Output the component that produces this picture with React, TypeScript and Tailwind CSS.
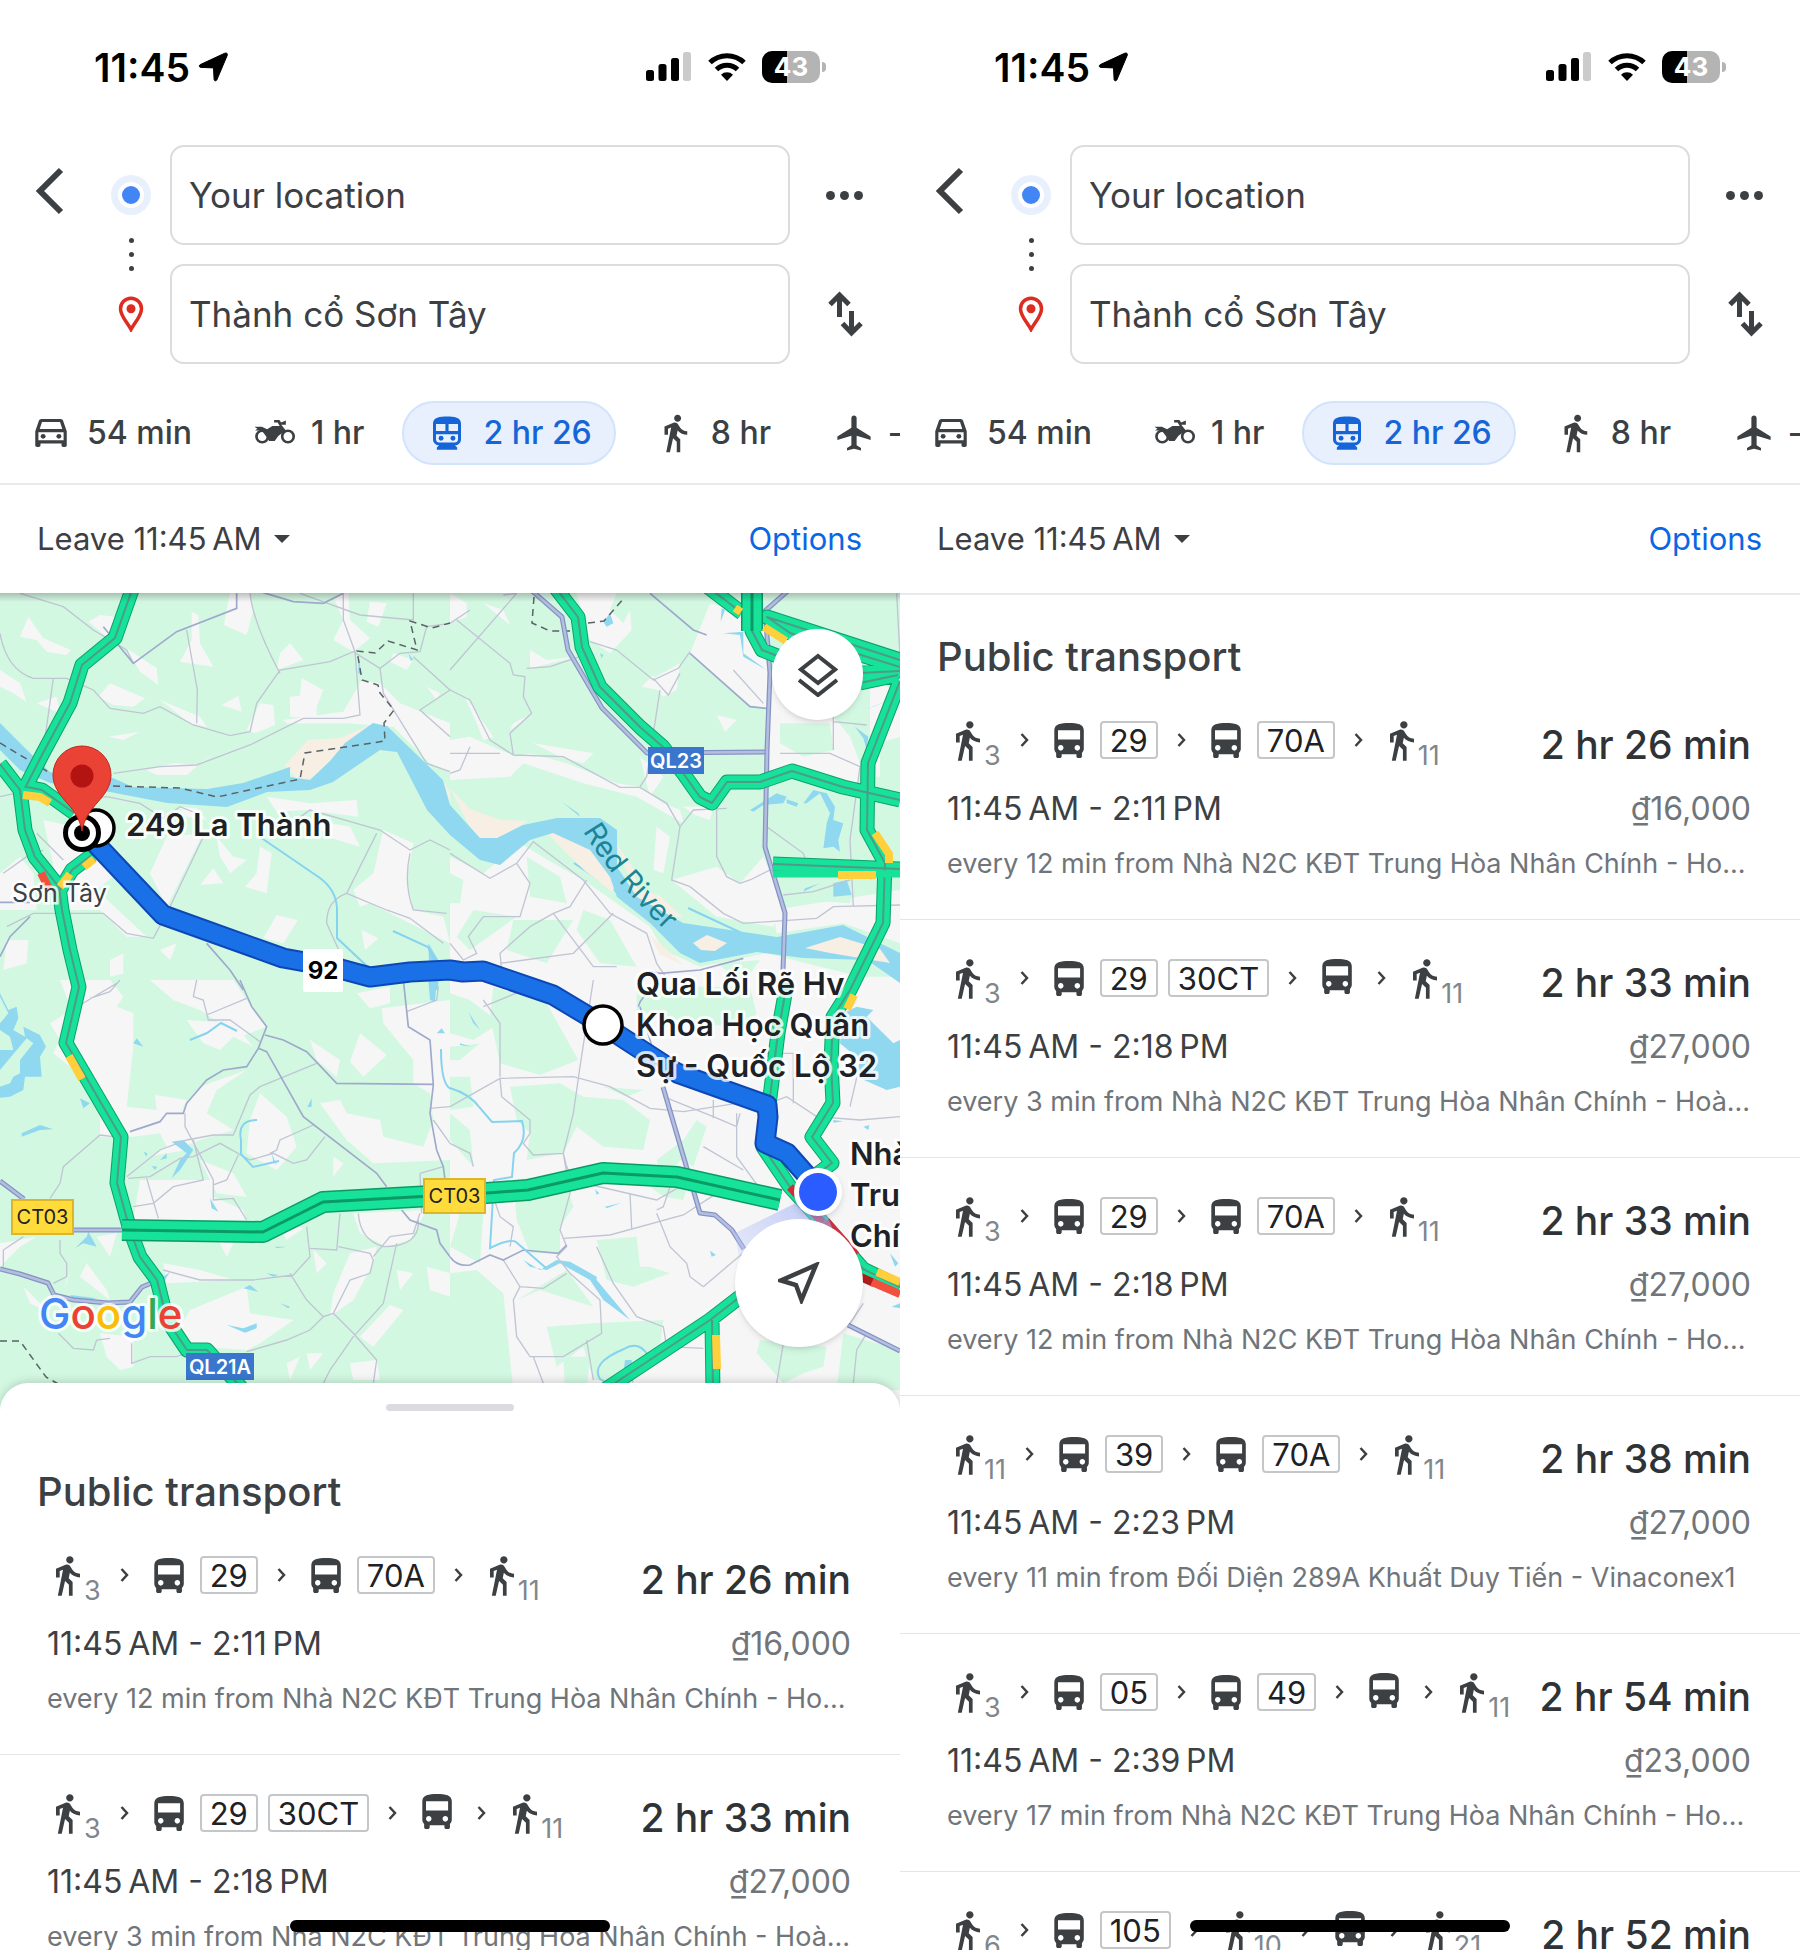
import { Fragment, type ReactNode } from "react";
import clsx from "clsx";

type Step = { kind: "walk"; min: number } | { kind: "bus"; lines: string[] };

type Trip = {
  steps: Step[];
  duration: string;
  times: string;
  fare: string;
  note: string;
};

const walk = (min: number): Step => ({ kind: "walk", min });
const bus = (...lines: string[]): Step => ({ kind: "bus", lines });

const TRIPS: Trip[] = [
  {
    steps: [walk(3), bus("29"), bus("70A"), walk(11)],
    duration: "2 hr 26 min",
    times: "11:45\u2009AM - 2:11\u2009PM",
    fare: "₫16,000",
    note: "every 12 min from Nhà N2C KĐT Trung Hòa Nhân Chính - Ho...",
  },
  {
    steps: [walk(3), bus("29", "30CT"), bus(), walk(11)],
    duration: "2 hr 33 min",
    times: "11:45\u2009AM - 2:18\u2009PM",
    fare: "₫27,000",
    note: "every 3 min from Nhà N2C KĐT Trung Hòa Nhân Chính - Hoà...",
  },
  {
    steps: [walk(3), bus("29"), bus("70A"), walk(11)],
    duration: "2 hr 33 min",
    times: "11:45\u2009AM - 2:18\u2009PM",
    fare: "₫27,000",
    note: "every 12 min from Nhà N2C KĐT Trung Hòa Nhân Chính - Ho...",
  },
  {
    steps: [walk(11), bus("39"), bus("70A"), walk(11)],
    duration: "2 hr 38 min",
    times: "11:45\u2009AM - 2:23\u2009PM",
    fare: "₫27,000",
    note: "every 11 min from Đối Diện 289A Khuất Duy Tiến - Vinaconex1",
  },
  {
    steps: [walk(3), bus("05"), bus("49"), bus(), walk(11)],
    duration: "2 hr 54 min",
    times: "11:45\u2009AM - 2:39\u2009PM",
    fare: "₫23,000",
    note: "every 17 min from Nhà N2C KĐT Trung Hòa Nhân Chính - Ho...",
  },
  {
    steps: [walk(6), bus("105"), walk(10), bus(), walk(21)],
    duration: "2 hr 52 min",
    times: "11:45\u2009AM - 2:37\u2009PM",
    fare: "₫23,000",
    note: "every 15 min from Nhà N2C KĐT Trung Hòa Nhân Chính - Ho...",
  },
];

const WALK_PATH =
  "M13.5 5.5c1.1 0 2-.9 2-2s-.9-2-2-2-2 .9-2 2 .9 2 2 2zM9.8 8.9L7 23h2.1l1.8-8 2.1 2v6h2v-7.5l-2.1-2 .6-3C14.8 12 16.8 13 19 13v-2c-1.9 0-3.5-1-4.3-2.4l-1-1.6c-.4-.6-1-1-1.7-1-.3 0-.5.1-.8.1L6 8.3V13h2V9.6l1.8-.7";

const MODES: { name: string; label: string; icon: ReactNode; active?: boolean }[] = [
  {
    name: "Drive",
    label: "54 min",
    icon: (
      <>
        <path
          fillRule="evenodd"
          d="M18.92 5.01C18.72 4.42 18.16 4 17.5 4h-11c-.66 0-1.21.42-1.42 1.01L3 11v8c0 .55.45 1 1 1h1c.55 0 1-.45 1-1v-1h12v1c0 .55.45 1 1 1h1c.55 0 1-.45 1-1v-8l-2.08-5.99zM6.85 5.7h10.3l1.3 4H5.55l1.3-4zM19.2 16.2H4.8v-4.7h14.4v4.7z"
        />
        <circle cx="7.5" cy="13.9" r="1.4" />
        <circle cx="16.5" cy="13.9" r="1.4" />
      </>
    ),
  },
  {
    name: "Motorcycle",
    label: "1 hr",
    icon: (
      <>
        <path d="M.3 8.4h4.2l3 1.4 3-1.8h4.2l-1.2-2h-2V4.6h3l1 1.4 2.700-1.200v2.500h-2.600l2.600 3.200-4.200 3-2.200 3H8.600L7 14l-2.600-3.400H.6L1.900 9.600.3 8.400z" />
        <circle cx="4.700" cy="14" r="3.300" fill="none" stroke="currentColor" strokeWidth="1.500" />
        <circle cx="19.400" cy="14" r="3.300" fill="none" stroke="currentColor" strokeWidth="1.500" />
      </>
    ),
  },
  {
    name: "Public transport",
    label: "2 hr 26",
    active: true,
    icon: (
      <>
        <path
          fillRule="evenodd"
          d="M12 2.500c-4 0-8 .5-8 4v9c0 1.930 1.570 3.500 3.500 3.500L6.200 20.300V21.500h11.600v-1.200L16.500 19c1.930 0 3.500-1.570 3.500-3.500v-9c0-3.500-4-4-8-4zM5.700 6.900h5.400v4H5.700v-4zm7.200 0h5.400v4h-5.400v-4zM5.700 12.700h12.600v2.800c0 1.100-.8 1.900-1.900 1.900H7.600c-1.100 0-1.900-.8-1.900-1.900v-2.800z"
        />
        <circle cx="8.600" cy="15" r="1.400" />
        <circle cx="15.400" cy="15" r="1.400" />
      </>
    ),
  },
  { name: "Walk", label: "8 hr", icon: <path d={WALK_PATH} /> },
  {
    name: "Fly",
    label: "—",
    icon: (
      <path d="M21.500 16v-2l-8-5V3.500c0-.83-.67-1.500-1.500-1.500s-1.500.67-1.500 1.500V9l-8 5v2l8-2.500V19l-2.500 1.500V22l4-1 4 1v-1.500L13.500 19v-5.500l8 2.500z" />
    ),
  },
];

function StatusBar() {
  return (
    <div className="flex h-[134px] items-center justify-between pr-[74px] pl-[94px] text-black">
      <div className="flex items-center gap-2">
        <span className="text-[39px] leading-none font-semibold">11:45</span>
        <svg viewBox="0 0 30 30" className="size-[30px]" aria-hidden="true">
          <path
            d="M28.500 1.200c.9.300 1.200 1 .8 2L18.800 28c-.6 1.300-2.600 1-2.700-.5l-.6-11.600-12.600-.5C1 15.300.7 13.400 2.300 12.600L26.600 1.300c.7-.3 1.300-.4 1.900-.1z"
            fill="currentColor"
            stroke="currentColor"
          />
        </svg>
      </div>
      <div className="flex items-center gap-4">
        <svg viewBox="0 0 46 30" className="h-[30px] w-[46px]" aria-label="Signal">
          <rect x="0" y="18" width="8" height="11" rx="2.500" />
          <rect x="12.500" y="12" width="8" height="17" rx="2.500" />
          <rect x="25" y="6" width="8" height="23" rx="2.500" />
          <rect x="37" y="0" width="8" height="29" rx="2.500" fill="#cbcbcb" />
        </svg>
        <svg viewBox="0 0 38 28" className="h-7 w-[38px]" aria-label="Wi-Fi">
          <g fill="none" stroke="currentColor" strokeWidth="5">
            <path d="M2 9.500a24.500 24.500 0 0 1 34 0" />
            <path d="M8.500 16.500a15 15 0 0 1 21 0" />
          </g>
          <path d="M19 28l-6-6.200a8.500 8.500 0 0 1 12 0z" />
        </svg>
        <div className="flex items-center gap-0.5">
          <div className="flex h-8 w-[58px] items-center justify-center rounded-[10px] bg-[linear-gradient(90deg,#000_43%,#b4b4b4_43%)] text-[26px] leading-none font-bold text-white">
            43
          </div>
          <div className="h-2.5 w-1 rounded-r-full bg-[#b4b4b4]" />
        </div>
      </div>
    </div>
  );
}

function SearchFields() {
  return (
    <div className="grid grid-cols-[101px_60px_1fr_110px] items-center gap-y-[19px] pt-[11px]">
      <button type="button" aria-label="Back" className="ml-[34px] mb-2 w-8">
        <svg viewBox="0 0 32 50" className="h-[50px] w-8">
          <path d="M27 4L6 25l21 21" fill="none" stroke="#3c4043" strokeWidth="6" />
        </svg>
      </button>
      <div className="relative flex items-center justify-center">
        <span className="flex size-10 items-center justify-center rounded-full bg-[#e8f0fe]">
          <span className="size-[26px] rounded-full border-4 border-white bg-[#4285f4]" />
        </span>
        <span className="absolute top-[63px] flex flex-col gap-[9px]">
          <i className="size-[5px] rounded-full bg-[#3c4043]" />
          <i className="size-[5px] rounded-full bg-[#3c4043]" />
          <i className="size-[5px] rounded-full bg-[#3c4043]" />
        </span>
      </div>
      <div className="pl-[9px]">
        <input
          aria-label="From"
          defaultValue="Your location"
          className="h-[100px] w-full rounded-[14px] border-2 border-[#dadce0] bg-white px-[17px] text-[35px] text-[#3c4043]"
        />
      </div>
      <button type="button" aria-label="More" className="ml-9 flex gap-[5px]">
        <i className="size-[9px] rounded-full bg-[#3c4043]" />
        <i className="size-[9px] rounded-full bg-[#3c4043]" />
        <i className="size-[9px] rounded-full bg-[#3c4043]" />
      </button>

      <span />
      <svg viewBox="0 0 26 36" className="mx-auto h-9 w-[26px]" aria-hidden="true">
        <path
          d="M13 33.500C9 26 2.500 20 2.500 12.700a10.500 10.500 0 0 1 21 0C23.500 20 17 26 13 33.500z"
          fill="none"
          stroke="#dd2c20"
          strokeWidth="3.500"
        />
        <circle cx="13" cy="12.700" r="4.500" fill="#dd2c20" />
      </svg>
      <div className="pl-[9px]">
        <input
          aria-label="To"
          defaultValue="Thành cổ Sơn Tây"
          className="h-[100px] w-full rounded-[14px] border-2 border-[#dadce0] bg-white px-[17px] text-[35px] text-[#3c4043]"
        />
      </div>
      <button type="button" aria-label="Swap" className="ml-[38px]">
        <svg viewBox="0 0 36 46" className="h-[46px] w-9">
          <g fill="none" stroke="#3c4043" strokeWidth="5">
            <path d="M11.500 26V4M2 13.500L11.500 4l9.500 9.500" />
            <path d="M23.500 20v22M14.500 32.500l9 9.500 9.500-9.500" />
          </g>
        </svg>
      </button>
    </div>
  );
}

function Header() {
  return (
    <header>
      <StatusBar />
      <SearchFields />
      <nav className="mt-[37px] flex gap-[14px] overflow-hidden border-b-2 border-[#e8eaed] pb-[18px] pl-1.5">
        {MODES.map((mode) => (
          <button
            key={mode.name}
            type="button"
            aria-label={mode.name}
            className={clsx(
              "flex h-16 shrink-0 items-center gap-[15px] rounded-full border-2 px-[22px] text-[32px] font-medium whitespace-nowrap",
              mode.active
                ? "border-[#d2e3fc] bg-[#e8f0fe] text-[#1565d8]"
                : "border-transparent text-[#3c4043]",
            )}
          >
            <svg viewBox="0 0 24 24" className="size-[42px]" fill="currentColor">
              {mode.icon}
            </svg>
            {mode.label}
          </button>
        ))}
      </nav>
      <div className="flex h-[108px] items-center justify-between pr-[38px] pl-[37px] text-[31px]">
        <button type="button" className="flex items-center gap-3 text-[#3c4043]">
          Leave 11:45{"\u2009"}AM
          <svg viewBox="0 0 16 8" className="h-2 w-4" aria-hidden="true">
            <path d="M0 0h16L8 8z" fill="currentColor" />
          </svg>
        </button>
        <a href="#options" className="text-[#0b66e4]">
          Options
        </a>
      </div>
    </header>
  );
}

function StepView({ step }: { step: Step }) {
  if (step.kind === "walk") {
    return (
      <span className="flex items-start gap-1 pl-[2px]">
        <svg viewBox="6 1.500 13 21.500" className="h-10 w-6" aria-label="Walk">
          <path d={WALK_PATH} fill="#3c4043" />
        </svg>
        <sub className="static mt-[19px] text-[27px] leading-8 text-[#80868b]">{step.min}</sub>
      </span>
    );
  }
  return (
    <span className="flex items-center gap-[10px]">
      <svg viewBox="4 2 19.200 19" className="h-[35px] w-9" aria-label="Bus">
        <path
          d="M4 16c0 .88.39 1.670 1 2.220V20c0 .55.45 1 1 1h1c.55 0 1-.45 1-1v-1h8v1c0 .55.45 1 1 1h1c.55 0 1-.45 1-1v-1.780c.61-.55 1-1.340 1-2.220V6c0-3.500-3.580-4-8-4s-8 .5-8 4v10zm3.500 1c-.83 0-1.500-.67-1.500-1.500S6.670 14 7.500 14s1.500.67 1.500 1.500S8.330 17 7.500 17zm9 0c-.83 0-1.500-.67-1.500-1.500s.67-1.500 1.500-1.500 1.500.67 1.500 1.500-.67 1.500-1.500 1.500zm1.500-6H6V6h12v5z"
          fill="#3c4043"
        />
      </svg>
      {step.lines.map((line) => (
        <span
          key={line}
          className="flex h-[38px] items-center rounded-[4px] border-2 border-[#c4c7c9] px-2 text-[31px] leading-none text-[#202124]"
        >
          {line}
        </span>
      ))}
    </span>
  );
}

function TripRow({ trip }: { trip: Trip }) {
  return (
    <li className="h-[238px] shrink-0 border-b border-[#e3e5e8] pt-[39px] pr-[49px] pl-[47px]">
      <div className="flex h-12 items-start justify-between">
        <div className="flex h-12 items-start pl-[7px]">
          {trip.steps.map((step, i) => (
            <Fragment key={i}>
              {i > 0 && (
                <svg viewBox="0 0 9 14" className="mt-3 mr-[25px] ml-[19px] h-[14px] w-[9px]" aria-hidden="true">
                  <path d="M1.500 1l5.500 6-5.500 6" fill="none" stroke="#3c4043" strokeWidth="2.500" />
                </svg>
              )}
              <StepView step={step} />
            </Fragment>
          ))}
        </div>
        <strong className="text-[39px] leading-[48px] font-medium whitespace-nowrap text-[#303336]">
          {trip.duration}
        </strong>
      </div>
      <div className="mt-5 flex justify-between text-[32px] leading-10">
        <span className="text-[#3c4043]">{trip.times}</span>
        <span className="text-[#70757a]">{trip.fare}</span>
      </div>
      <p className="mt-[15px] text-[27px] leading-10 whitespace-nowrap text-[#70757a]">{trip.note}</p>
    </li>
  );
}

function TripList({ trips }: { trips: Trip[] }) {
  return (
    <>
      <h2 className="mt-9 pl-[37px] text-[40px] leading-[51px] font-medium text-[#3c4043]">
        Public transport
      </h2>
      <ul>
        {trips.map((trip, i) => (
          <TripRow key={i} trip={trip} />
        ))}
      </ul>
    </>
  );
}

// Ground cover, drawn per quadrant on a grid of 1350 units to 450 px.
const TERRAIN = [
  {
    at: "translate(0 -3) scale(.33333)",
    clear:
      "M85 80L60 140 110 150 140 185 200 195 212 180 130 145ZM575 65L595 75 600 160 640 230 540 215 575 150ZM690 10L750 10 760 60 740 135 672 105 680 60ZM1110 35L1160 40 1135 110 1100 95ZM1000 20L1045 10 1050 90 1110 145 1060 185 1000 150 1030 90ZM870 160L910 210 830 240 840 190ZM300 75L345 80 320 140 265 95ZM380 175L470 235 475 285 420 245ZM330 280L435 325 400 350 340 345 295 320ZM0 240L60 280 80 335 40 310 0 290ZM905 265L970 300 950 350 950 385 870 380 870 320 900 318ZM780 340L820 345 825 405 765 430 740 420ZM665 345L715 318 725 365ZM480 330L600 380 620 410 570 400ZM325 440L420 425 370 450ZM440 540L520 520 600 525 650 480 560 555 470 555ZM1085 270L1140 280 1200 340 1350 400V545L1290 520 1180 410 1040 400 860 400 850 390 1030 365ZM800 620L930 640 1070 630 1075 680 920 660 830 665ZM535 650L590 655 620 690 560 680ZM940 690L1050 710 1080 770 980 740ZM650 740L700 800 740 810 690 850 680 830 660 800ZM780 770L815 790 800 910 735 890 770 850ZM600 885L640 835 670 880ZM1150 720L1240 760 1220 870 1240 960 1330 980 1350 1060 1290 1030 1110 940 1080 950 1060 900 1120 850ZM830 975L893 990 850 1060 790 1045ZM1085 1020L1135 1045 1095 1080ZM500 740L610 730 500 950 450 850ZM130 690L270 720 350 850 290 900 440 1040 380 1040 300 960 190 960ZM0 850L60 800 100 850 110 960 0 960ZM20 1050L85 1050 80 1120 10 1140ZM330 1110L370 1090 370 1150 330 1160ZM480 1080L530 1060 510 1110ZM1180 190L1240 210 1220 240 1170 215ZM1280 290L1320 310 1310 330ZM110 340L170 320 180 370Z",
    green: "",
    lanes:
      "M60 10L190 50 280 120 380 180 400 220M0 130Q20 240 100 265L200 265 280 300 330 355 430 370 480 350 580 405 690 437 750 425 770 340 840 240 990 215 1060 185 1140 235 1200 190 1260 185 1280 110 1350 100M750 10Q760 100 840 250M560 120L592 300 590 400M1030 10L1030 90 1065 185 1080 375 1030 385 910 385 750 465 590 525 480 530 340 550M900 10L1080 75 1240 90V10M1140 235L1150 310 1280 520 1350 545M1240 200L1350 300 1260 360 1350 440M160 265L130 480M0 620Q100 590 200 640L320 620 420 640 490 685 540 650 590 670M110 730L190 810M10 850L80 800 130 780M610 740L510 950 460 1045 380 1030 310 970 100 970 20 1010M860 710L930 660 1140 720 1230 780 1290 750 1350 780M1130 730L1040 910 1160 960 1230 985 1330 1060M1230 790Q1210 880 1240 960L1340 970M1040 910Q980 930 980 1000L1030 1110",
    roads: "M710 10L710 55 530 125 400 220 310 110M780 5L880 35 970 40 1030 10M0 937L90 937M620 1060L690 1140 730 1200M0 1100L30 1040 90 980",
    water:
      "M1225 190l15 20-8 2zM1075 195l10 60-10-5z M1285 1060l30 50v90h-25z",
  },
  {
    at: "translate(450 -3) scale(.33333)",
    clear:
      "M380 10L500 10 480 60 520 100 540 60 545 120 480 190 420 150ZM0 10L50 40 50 80 0 100ZM780 40L940 80 960 360 900 345 720 190ZM600 270L690 220 680 300 640 320ZM240 180L290 210 380 200 240 235ZM100 40L160 60 180 105 150 80ZM0 450L60 440 150 480 200 500 240 490 350 520 500 580 570 590 640 640 690 660 700 700 560 620 400 580 220 520 180 560 0 570ZM40 310L130 440 100 450 80 400ZM250 460L430 490 400 520 330 500ZM800 375L860 390 825 425ZM620 710L660 740 640 850 610 840ZM700 650L790 650 780 690 735 675ZM800 830L870 880 940 800 1000 950 970 1010 800 980 665 870ZM0 800L100 850 210 760 310 820 400 870 600 1010 640 1080 750 1130 950 1090 1350 1190V1200H0ZM960 250L1150 380 1200 440 1230 520 1220 620 960 540ZM970 960L1350 900V1060L1180 1000 980 1030ZM180 420L250 370 190 400ZM1130 150L1350 320V560L1260 560V300ZM570 500L640 560 600 620ZM575 290L610 255 625 300Z",
    green:
      "M230 800L330 860 350 940 240 920ZM70 960L200 980 60 1080 20 1040ZM190 990L370 990 290 1120 170 1080ZM400 960L480 990 560 1130 450 1120 380 1020ZM990 400L1140 400 1150 480 1060 500 990 460ZM960 570L1200 600 1210 720 970 700ZM960 730L1190 750 1200 850 1000 830ZM1040 890L1220 860 1200 940 1050 930ZM0 850L40 870 30 940 0 940ZM800 1120L930 1110 880 1180ZM1290 460L1350 440V600L1290 590Z",
    lanes:
      "M0 100L60 60M0 240L200 10M20 90L180 220 190 255 225 260 220 320 245 370 180 430 190 495M230 235L300 230 390 200M160 15L200 10M420 155L500 180 610 270 685 235 720 185M610 265L655 315 690 250M630 300L590 560 570 590M0 300L60 330 120 450 190 495 340 500 510 592 570 592 650 640 690 710 665 870 720 890 820 970 880 1000 1100 985 1150 950 1350 945M800 650V800L830 860 870 880 900 870 960 840M690 710L730 660 830 655M0 490L150 490M0 550L30 540 60 470M0 790L120 865 200 820 250 755 400 870 480 970 590 1030 620 1120 660 1180M200 820L240 880 210 980 100 980 55 1040 80 1090 40 1110 0 1060M410 870L360 950 310 970 240 1010 150 1090 160 1190M310 970L430 1130 500 1130M490 970L370 1090 150 1120M1150 380V480M990 490L1140 490 1230 530 1200 750 1210 950M950 710L1060 790 1070 820M1000 915L1090 905 1200 870M1150 395L1250 405M940 340L850 240M1340 10L1350 200",
    roads:
      "M720 190L900 350 950 355M600 10L730 120 770 135M570 1200Q560 1130 630 1150L750 1140 880 1105",
    water:
      "M335 635L390 680 385 670ZM820 130L880 125 880 190 950 240 880 200 870 135ZM480 70L490 100 470 110 460 95ZM815 55L825 60 812 95ZM900 660L980 610 1010 620 1000 640 940 645 910 665ZM1010 628L1045 640 1040 650 1010 640ZM1060 640L1090 600 1130 610 1155 650 1150 690 1180 700 1165 750 1170 785 1150 770 1120 775 1130 700 1140 670 1110 610 1070 640ZM1255 355L1320 330 1270 350ZM1215 410L1255 440 1250 480 1240 445ZM1065 895L1110 880 1060 905ZM1150 880L1190 870 1205 915 1150 920ZM450 190L460 195 455 205Z",
  },
  {
    at: "translate(0 387) scale(.33333)",
    clear:
      "M180 0L330 0 370 50 350 80 400 100 400 200 380 380 470 390 465 345 560 360 540 400 600 320 740 270 650 330 620 400 700 450 600 480 500 520 400 470 300 470 300 410 330 400 210 260 160 220 180 180 150 130 215 90ZM450 0L700 0 740 60 800 140 720 170 600 90 520 60ZM560 120L700 130 760 200 700 170 660 210 610 190ZM1070 40L1170 20 1170 70 1110 85ZM1145 85L1350 60V540L1120 550 1040 480 960 370 1020 360 1040 400 1140 420 1150 470 1270 500 1300 420 1290 340 1240 310 1240 240 1150 130ZM1080 160L1160 225 1090 290 1050 245ZM930 180L1020 240 1010 290 950 240ZM780 340L860 410 890 500 830 570 740 520 750 420ZM1000 530L1030 550 1000 590ZM420 600L640 600 640 650 730 690 740 720 400 720ZM490 850L600 870 700 900 500 910ZM260 850L320 930 330 960 240 890ZM200 900L215 870 190 930ZM570 990L740 920 750 1000 880 1020 780 1090 740 1110 600 1100 530 1060ZM650 770L700 790 680 830ZM830 725L910 745 860 780ZM940 810L980 850 950 880ZM1050 820L1130 800 1120 850 1060 960 990 1010 1000 940ZM1190 870L1240 880 1200 930ZM1280 860L1350 880V950L1290 930ZM1170 975L1210 990 1120 1100 1080 1070ZM300 1060L400 1070 400 1160 360 1170 320 1130ZM920 1120L970 1120 930 1170ZM860 1150L900 1130 870 1200ZM1050 1150L1130 1140 1140 1200 1060 1200ZM290 770L350 760 330 830ZM70 920L110 960 150 1000 90 970ZM0 790L110 770 60 800 0 860ZM600 540L700 580 740 650 650 640ZM440 530L500 480 560 510ZM1060 700L1280 690 1230 780 1160 800 1080 760Z",
    green: "M1260 580L1330 565 1340 620 1270 650ZM400 470L480 460 500 500 400 560Z",
    lanes:
      "M240 75L350 10M360 0L330 35 270 55M590 0L580 50 610 60 625 120 690 120 780 185M620 105L740 55M555 400V440L640 600V660L700 655 740 720M385 595L450 590 540 535 580 530M380 590L480 510 560 480 640 465 700 465 750 345 780 320 950 250M580 530L660 490 750 540 820 520 880 550 920 540 975 470M580 480L610 600 520 620 460 670 400 680M440 595L475 715M940 435L840 480 830 510 810 520M715 525L680 600 640 615M300 465L340 470M300 465L190 560 180 610 150 655M70 770L10 810 10 860M180 780V820L200 850V890L160 910M490 870L600 900 760 900 880 885 930 830 920 740M930 805L1010 810 1020 700M1015 800L1110 820 1120 840 1110 880 1050 900 1000 1000 970 1010 920 960 870 880M970 1010L930 1050 860 1080 740 1115M1120 830L1170 770 1240 760 1260 700M1190 790L1150 970 1060 1070 990 1170 970 1210M1000 1000L1060 1060 1130 1140 1120 1210M1075 700Q1080 780 1150 800 1260 800 1255 720M175 1060L220 1105 280 1110 290 1080 330 1075M395 1090V1150L450 1130 530 1130 580 1110M1260 580L1330 560M1260 580L1265 700M1290 385L1350 380M1300 420L1350 490M1220 95L1310 60 1315 20",
    roads:
      "M720 0L755 80 800 140 775 205 740 260 670 270 620 300 560 370 550 400 500 400 480 425 390 455M795 165L850 180 920 215 1010 310 1300 313M775 205L800 215 910 410 1130 580 1160 620M1210 0L1225 140 1290 180 1300 315 1290 400 1310 510 1330 560 1335 600M1205 690L1230 720 1310 750 1320 790 1350 830",
    water:
      "M0 40L25 90 50 80 55 115 40 150 75 170 70 140 120 165 138 200 120 230 125 290 75 290 70 330 30 350 0 353V320L30 310 40 290 60 280 60 240 100 190 80 175 0 270V210L40 210 30 170 0 150V130L25 100 0 50ZM65 460L120 435 160 448 120 450 65 470ZM410 175L430 200 400 190ZM240 355L270 370 250 385ZM515 485L550 480 580 510 540 570 515 595 540 540 560 520ZM480 540L500 520 500 535ZM430 515L442 520 440 530ZM455 558L472 560 465 570ZM815 520L830 555 820 545ZM935 355V380L922 382ZM1285 0L1310 0 1305 65 1290 60ZM1325 145L1335 160 1310 160ZM265 755L290 800 250 790 225 805 260 770ZM630 655L655 695 635 685ZM680 1035L730 1045 770 1030 770 1045 735 1058ZM730 925L750 915 775 935ZM840 970L870 980 865 985ZM485 895L510 875 495 900ZM825 800L860 800 830 805ZM800 880L835 885 820 890ZM210 945L290 955 230 965Z",
  },
  {
    at: "translate(450 387) scale(.33333)",
    clear: "M0 -10H1350V1330H0Z",
    green:
      "M130 20L290 70 385 240 270 285 150 250 120 110ZM0 40L60 60 150 130 70 180 0 160ZM560 20L900 20 920 100 880 140 700 130 560 90ZM180 320L330 310 400 350 520 360 600 420 580 510 460 500 380 440 340 520 230 540 240 460 200 420ZM740 420L770 440 730 560 690 540 640 620 620 540 700 480ZM190 600L340 580 370 680 330 740 330 820 240 820 200 720ZM0 880L80 870 160 940 200 1330H0ZM440 780L560 770 570 860 600 860 660 880 550 920 470 900ZM200 960L350 870 430 980 270 930ZM290 1040L430 1030 640 1020 630 1100 500 1200 430 1200 400 1100 320 1160ZM0 290L60 290 70 380 0 390ZM0 400L60 450 70 560 0 480ZM930 1080L1130 1100 1120 1160 1060 1180 1000 1210 920 1120ZM1180 1060L1350 1110V1230H1160ZM600 620L720 590 700 660 640 650ZM340 1130L420 1130 400 1330H350ZM460 320L580 330 530 350ZM0 200L90 190 30 240 0 240ZM30 700L100 700 90 850 0 800Z",
    lanes:
      "M430 0L390 260 370 400 340 520 360 640 330 750 350 800 320 830 360 880 450 960 455 1060 340 1130 240 1130 200 1070 190 960 210 920 160 840M0 380L150 295 370 290 480 320 600 385 700 395 860 370M150 295L155 350 240 420 240 460 220 490 250 525 340 520 350 560 370 600M100 60L150 130 150 290M100 80L210 35M340 775L480 765 700 705 800 640M0 490L60 520 70 560M120 620L150 710 190 740 180 800M540 640L545 745M360 600L620 660 690 620M620 700L660 800 710 850 720 890 760 920M760 920L890 810M210 920L280 925 350 880M440 800L490 910 560 1010 640 1040 650 1100 760 1105M640 350L790 410 860 440 870 400M790 360V415M860 400L860 530 940 640M940 410L930 380 1010 350 1100 410 1230 420 1350 410M1230 250L1200 380M920 220L1030 220 1030 370M760 500L880 570M660 620L640 680 620 690M980 1210L1000 1090M1210 1210L1220 1110 1250 1060M1200 1030L1240 970M250 1130L280 1210M410 1080L430 1200",
    roads:
      "M0 830Q20 860 60 855L120 825 160 840 220 810 325 820 350 795M565 80Q570 50 620 20M570 80L630 280",
    water:
      "M1180 100L1220 80 1270 90 1250 110 1330 190 1350 180V320L1310 330 1220 290 1230 240 1170 190ZM55 95L90 150 70 130ZM30 190L65 200 30 195ZM220 840L270 870 320 840 360 845 440 890 440 900 540 1020 460 960 420 900 330 850 290 870 240 860ZM525 1140L545 1140 550 1210 520 1180ZM465 680L515 668 470 685ZM780 812L798 825 785 830ZM1320 820L1345 850 1335 860ZM1325 980L1350 970V985ZM1240 440L1258 435 1255 450ZM1150 420L1180 424 1150 428ZM435 628L448 640 440 644Z",
  },
];

const STREAMS = [
  "M260 244l60 41q16 12 17 30v30l34 32",
  "M393 338l35 16 10 18",
  "M190 447l17-7 14-10 16 8M257 527q-20 0-16 20l0 14 12 13 26-6",
  "M441 456q0 36 10 40",
  "M450 495q20 6 30 20l12 14 30-1q6 20-8 32l-2 24-18 3-4 68q20-10 26-6l30 26",
  "M650 766q-10-20-26-10-34 14-24 30l36 20",
  "M574 270l50 34 60 40",
  "M688 315l60 28 70 12",
];

const TRAFFIC = [
  "M133-6L115 45 82 72 70 110 43 160 25 195",
  "M0 171L20 197 25 237 35 264 59 294 62 317 70 357 79 394 66 450 121 544 117 590 130 637 140 664 157 687 167 727 187 757 207 757 246 800",
  "M27 194L42 197 74 220",
  "M92 262L72 277 60 297",
  "M555-6L578 24 582 54 600 94 640 134 663 154 683 180 700 204 712 210 727 189 760 189 792 178 843 194 900 207",
  "M708-6L742 20",
  "M752 0V38L762 57 790 68",
  "M900 67L767 24 790 40 900 74",
  "M860 80L900 78M860 90L898 82",
  "M900 88L868 170 867 237 885 270 883 330 850 397 833 424 831 470 833 510 812 544 832 570 803 592",
  "M773 271L900 276",
  "M787 390L778 440 770 504 763 554 790 594 823 630 863 676 900 694",
  "M600 800L710 727 745 700M712 727L713 800",
];

const WIDE_TRAFFIC = [
  "M122 637L263 639 323 609 413 604 487 600 528 597 603 580 677 584 780 607",
  "M752-6V38",
];

const SLOW = [
  { d: "M23 202L40 204 50 210", color: "#ffcf3c" },
  { d: "M94 266L84 274M70 281L60 294", color: "#ffcf3c" },
  { d: "M41 280L50 298", color: "#f1503f" },
  { d: "M69 463L82 486", color: "#ffcf3c" },
  { d: "M735 15L741 19M764 34L786 48", color: "#ffcf3c" },
  { d: "M875 240L889 261V270", color: "#ffcf3c" },
  { d: "M838 282H876", color: "#ffcf3c" },
  { d: "M854 402L847 416", color: "#ffcf3c" },
  { d: "M716 742L717 776", color: "#ffcf3c" },
  { d: "M790 594L823 630M819 630L852 668M826 628L856 662", color: "#d0303a" },
  { d: "M856 682L874 690", color: "#b01c1c" },
  { d: "M872 689L900 701", color: "#f1503f" },
  { d: "M877 679L900 689", color: "#ffcf3c" },
];

const ROUTE =
  "M95 250L163 322 283 365 333 374 370 384 410 379 450 377 463 379 483 378 553 402 603 432 677 480 767 512 768 524 765 550 787 560 817 594";

function RoadShield({ x, y, width, label, tone }: { x: number; y: number; width: number; label: string; tone: "blue" | "yellow" }) {
  const blue = tone === "blue";
  const height = blue ? 27 : 34;
  return (
    <g>
      <rect
        x={x}
        y={y}
        width={width}
        height={height}
        fill={blue ? "#3a76cb" : "#ffdc3c"}
        stroke={blue ? "none" : "#dcb52b"}
        strokeWidth="2"
      />
      <text
        x={x + width / 2}
        y={y + height / 2 + 7}
        textAnchor="middle"
        className={blue ? "fill-white text-[20px] font-semibold" : "fill-[#202124] text-[20px]"}
      >
        {label}
      </text>
    </g>
  );
}

function StopLabel({ x, y, lines }: { x: number; y: number; lines: string[] }) {
  return (
    <text
      x={x}
      y={y}
      className="fill-[#202124] stroke-white/80 text-[31px] font-semibold"
      strokeWidth="6"
      strokeLinejoin="round"
      paintOrder="stroke"
    >
      {lines.map((line, i) => (
        <tspan key={line} x={x} dy={i ? 41 : 0}>
          {line}
        </tspan>
      ))}
    </text>
  );
}

function RouteMap() {
  return (
    <svg
      viewBox="0 0 900 830"
      preserveAspectRatio="xMidYMin slice"
      className="block h-[830px] w-full bg-[#d3f8e2]"
      role="img"
      aria-label="Route map"
    >
      <defs>
        <linearGradient id="cone" x1="1" y1="0" x2="0" y2="1">
          <stop offset="0" stopColor="#8fa2f5" stopOpacity=".7" />
          <stop offset="1" stopColor="#c8d0fa" stopOpacity=".2" />
        </linearGradient>
        <linearGradient id="edge" x1="0" y1="0" x2="0" y2="1">
          <stop offset="0" stopColor="#000" stopOpacity=".22" />
          <stop offset="1" stopColor="#000" stopOpacity="0" />
        </linearGradient>
      </defs>

      {TERRAIN.map((tile) => (
        <g key={tile.at} transform={tile.at} fill="none">
          <path d={tile.clear} fill="#f6f6f7" />
          <path d={tile.green} fill="#d3f8e2" />
          <path d={tile.water} fill="#90d8ef" />
          <path d={tile.lanes} stroke="#c0c5d4" strokeWidth="4" />
          <path d={tile.roads} stroke="#9fa9cb" strokeWidth="5" />
        </g>
      ))}
      <path d={STREAMS.join("")} fill="none" stroke="#86d3ef" strokeWidth="2" />

      <g fill="#f7efe4">
        <path d="M285 172L308 147 340 145 373 131 340 160 320 180 300 190ZM387 135L443 187 450 200V225L427 190 397 160ZM450 195L470 216 500 227 528 228 497 247 478 250ZM545 238L580 240 612 285 614 300 585 278ZM616 250L633 275 637 295 660 303 683 325 640 315ZM650 342L684 372 660 362Z" />
      </g>
      <path
        d="M0 130L27 157 50 179 113 185 133 194 207 196 243 190 290 174 290 184 310 187 330 168 345 150 373 130 387 133 443 187 450 212 480 245 497 245 523 232 557 225 600 225 617 237 617 274 637 304 683 330 777 344 843 332 900 360V390L867 367 803 365 757 359 700 370 680 360 650 330 617 304 610 284 590 257 553 240 530 247 500 272 480 267 450 242 427 217 397 159 380 157 333 189 310 197 267 199 227 214 167 210 110 199 50 190 20 177 0 157Z"
        fill="#90d8ef"
      />
      <path d="M693 350l14-8 20 8-12 8-14-1zM805 355l35-11 40 12 10 14-60-10z" fill="#f7efe4" />
      <path
        d="M0 150L50 180M113 193L180 195 217 204 300 186 305 160 385 148 384 130 394 117 380 100 378 92 362 87 357 58 375 60 388 48 417 57 410 28 432 35 450 30M534 4L532 30 550 38 570 38M588 30L604 28 625 4M0 748L20 748 46 784 60 792"
        fill="none"
        stroke="#5b6266"
        strokeWidth="1.500"
        strokeDasharray="7 5"
      />

      {/* secondary roads */}
      <g fill="none" strokeLinejoin="round">
        {["M530-4L562 24 568 57 602 115 647 160 765 159", "M790-4L765 18 770 80 767 157 765 254 785 320 783 377", "M74 637H122M0 588L24 606M0 676L20 681 48 690 54 702 74 707 108 710 130 709 142 694 154 689", "M663 494L700 620 715 622 732 637 744 656M848 732L900 758"].map((d) => (
          <Fragment key={d}>
            <path d={d} stroke="#8593c4" strokeWidth="5" />
            <path d={d} stroke="#b4bfe0" strokeWidth="2.500" />
          </Fragment>
        ))}
      </g>

      {/* live traffic */}
      <g fill="none" strokeLinejoin="round">
        <path d={TRAFFIC.join("")} stroke="#0d9f6c" strokeWidth="15" />
        <path d={TRAFFIC.join("")} stroke="#16e29a" strokeWidth="13" />
        <path d={TRAFFIC.join("")} stroke="#4d9c87" strokeWidth="2" />
        <path d={WIDE_TRAFFIC.join("")} stroke="#0b9a66" strokeWidth="22" />
        <path d={WIDE_TRAFFIC.join("")} stroke="#16e29a" strokeWidth="19" />
        <path d={WIDE_TRAFFIC.join("")} stroke="#0b9a66" strokeWidth="3" />
        <path d="M773 281H900" stroke="#16e29a" strokeWidth="7" />
        {SLOW.map((part) => (
          <path key={part.d} d={part.d} stroke={part.color} strokeWidth="8" />
        ))}
      </g>

      <path d="M818 599L735 640 745 700 850 680Z" fill="url(#cone)" />

      <g fill="none" strokeLinejoin="round">
        <path d={ROUTE} stroke="#0d47b5" strokeWidth="21" />
        <path d={ROUTE} stroke="#1a70e6" strokeWidth="17" />
      </g>

      <circle cx="96" cy="235" r="18" fill="#fff" stroke="#000" strokeWidth="3.500" />
      <circle cx="82" cy="240" r="16.500" fill="#fff" stroke="#000" strokeWidth="5" />
      <circle cx="82" cy="240" r="8" />
      <path
        d="M82 238c-2-12-8-20-15-28-8-9-14-17-14-28a29 29 0 0 1 58 0c0 11-6 19-14 28-7 8-13 16-15 28z"
        fill="#ea4335"
        stroke="#c5221f"
      />
      <circle cx="82" cy="183" r="11.500" fill="#b31412" />

      <circle cx="603" cy="432" r="19" fill="#fff" stroke="#000" strokeWidth="3.500" />
      <circle cx="818" cy="599" r="24" fill="#fff" className="drop-shadow-md" />
      <circle cx="818" cy="599" r="19" fill="#2a5cff" />

      <path id="river" d="M583 238Q612 288 676 348" fill="none" />
      <text className="fill-[#1a8594] text-[29px]">
        <textPath href="#river">Red River</textPath>
      </text>

      <RoadShield x={648} y={154} width={56} label="QL23" tone="blue" />
      <RoadShield x={186} y={760} width={68} label="QL21A" tone="blue" />
      <RoadShield x={12} y={607} width={61} label="CT03" tone="yellow" />
      <RoadShield x={424} y={586} width={61} label="CT03" tone="yellow" />

      <rect x="303" y="356" width="40" height="43" rx="2" fill="#fff" />
      <text x="323" y="386" textAnchor="middle" className="fill-black text-[24px] font-bold">
        92
      </text>

      <text
        x="12"
        y="309"
        className="fill-[#3c4043] stroke-white/80 text-[25px]"
        strokeWidth="5"
        paintOrder="stroke"
      >
        Sơn Tây
      </text>
      <StopLabel x={126} y={243} lines={["249 La Thành"]} />
      <StopLabel x={636} y={402} lines={["Qua Lối Rẽ Hv", "Khoa Học Quân", "Sự - Quốc Lộ 32"]} />
      <StopLabel x={850} y={572} lines={["Nhà", "Trun", "Chín"]} />

      <text
        x="39"
        y="736"
        className="stroke-white/80 text-[42px] font-medium"
        strokeWidth="6"
        strokeLinejoin="round"
        paintOrder="stroke"
      >
        <tspan fill="#4285f4">G</tspan>
        <tspan fill="#ea4335">o</tspan>
        <tspan fill="#fbbc05">o</tspan>
        <tspan fill="#4285f4">g</tspan>
        <tspan fill="#34a853">l</tspan>
        <tspan fill="#ea4335">e</tspan>
      </text>

      <rect width="900" height="9" fill="url(#edge)" />
    </svg>
  );
}

function HomeIndicator() {
  return <div className="absolute bottom-[18px] left-1/2 h-3 w-80 -translate-x-1/2 rounded-full bg-black" />;
}

export default function App() {
  return (
    <main className="grid h-screen grid-cols-2 overflow-hidden bg-white font-['Inter','Noto_Sans',sans-serif]">
      <section className="relative flex h-screen flex-col overflow-hidden">
        <Header />
        <div className="relative shrink-0">
          <RouteMap />
          <button
            type="button"
            aria-label="Layers"
            className="absolute top-[36px] right-[37px] flex size-[91px] items-center justify-center rounded-full bg-white shadow-md"
          >
            <svg viewBox="0 0 40 44" className="h-11 w-10">
              <g fill="none" stroke="#3c4043" strokeWidth="4">
                <path d="M20 3L37 16.500 20 30 3 16.500z" />
                <path d="M1 27l19 15 19-15" />
              </g>
            </svg>
          </button>
          <button
            type="button"
            aria-label="Re-centre"
            className="absolute top-[626px] right-[37px] flex size-32 items-center justify-center rounded-full bg-white shadow-md"
          >
            <svg viewBox="0 0 42 42" className="size-[42px]">
              <path
                d="M38 3L3 18.500l15 4.500L23.500 38z"
                fill="none"
                stroke="#3c4043"
                strokeWidth="4.500"
              />
            </svg>
          </button>
        </div>
        <div className="relative -mt-10 min-h-0 flex-1 overflow-hidden rounded-t-[28px] bg-white shadow-[0_-2px_8px_rgba(0,0,0,0.15)]">
          <div className="mx-auto mt-[21px] mb-[55px] h-[7px] w-32 rounded-full bg-[#dadce0]" />
          <TripList trips={TRIPS.slice(0, 2)} />
        </div>
        <HomeIndicator />
      </section>

      <section className="relative flex h-screen flex-col overflow-hidden">
        <Header />
        <div className="min-h-0 flex-1 overflow-hidden border-t-2 border-[#e8eaed]">
          <TripList trips={TRIPS} />
        </div>
        <HomeIndicator />
      </section>
    </main>
  );
}
